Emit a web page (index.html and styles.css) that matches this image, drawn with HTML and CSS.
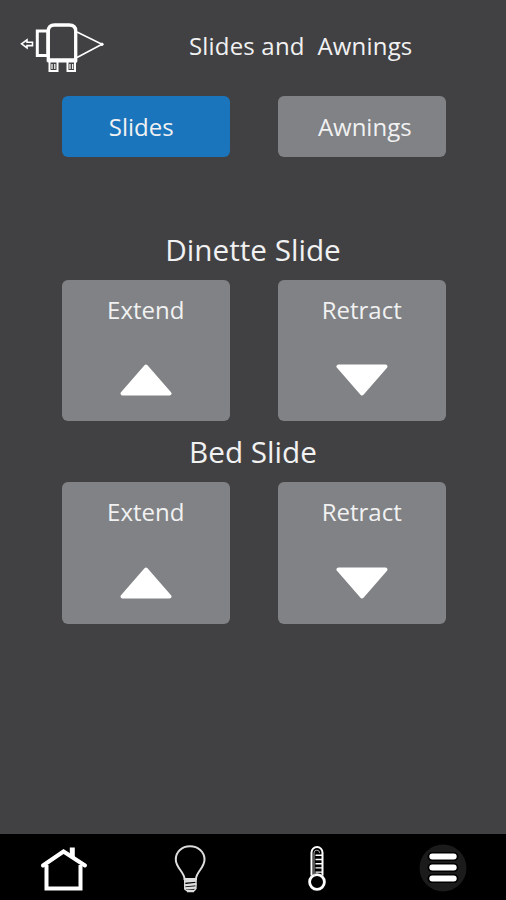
FILE: index.html
```html
<!DOCTYPE html>
<html lang="en">
<head>
  <meta charset="UTF-8">
  <meta name="viewport" content="width=device-width, initial-scale=1.0">
  <title>Slides and Awnings</title>
  <link rel="stylesheet" href="styles.css">
</head>
<body>
  <div class="app">
    <header class="header">
      <svg class="camper" viewBox="0 0 90 60" fill="none" stroke="#fff">
        <path d="M1.5 25.8 L7 21.8 V24.2 H12.5 V27.6 H7 V30 Z" stroke-width="1.6"/>
        <rect x="17.3" y="13" width="10.5" height="24.5" stroke-width="3"/>
        <path d="M28.3 42 V13 Q28.3 7 34.5 7 H49 Q55.7 7 55.7 13 V42 Z" stroke-width="3.3"/>
        <path d="M57 14 L82 26.3 L57 39.5" stroke-width="1.6"/>
        <circle cx="82" cy="26.3" r="1.2" fill="#fff"/>
        <path d="M27.5 43.5 H57 M29.5 44 V53 H37.5 V44 M47.5 44 V53 H55 V44" stroke-width="2"/>
        <path d="M32 46 V51 M34.8 46 V51 M50 46 V51 M52.7 46 V51" stroke-width="1.2"/>
      </svg>
      <h1>Slides and&nbsp; Awnings</h1>
    </header>

    <div class="row tabs">
      <button class="tab active">Slides</button>
      <button class="tab awnings">Awnings</button>
    </div>

    <section class="slide-group">
      <h2>Dinette Slide</h2>
      <div class="row">
        <button class="control">
          Extend
          <svg class="arrow" viewBox="0 0 52 32"><path d="M26 2.5 L49.5 29.5 H2.5 Z"/></svg>
        </button>
        <button class="control">
          Retract
          <svg class="arrow" viewBox="0 0 52 32"><path d="M2.5 2.5 H49.5 L26 29.5 Z"/></svg>
        </button>
      </div>
    </section>

    <section class="slide-group">
      <h2>Bed Slide</h2>
      <div class="row">
        <button class="control">
          Extend
          <svg class="arrow" viewBox="0 0 52 32"><path d="M26 2.5 L49.5 29.5 H2.5 Z"/></svg>
        </button>
        <button class="control">
          Retract
          <svg class="arrow" viewBox="0 0 52 32"><path d="M2.5 2.5 H49.5 L26 29.5 Z"/></svg>
        </button>
      </div>
    </section>

    <nav class="navbar">
      <a class="nav-item">
        <svg viewBox="0 0 60 60" fill="none" stroke="#fff">
          <path d="M13.5 28 V51.5 H47.5 V28" stroke-width="4"/>
          <path d="M10 28.5 L30.5 14.5 L52 28.5" stroke-width="4" stroke-linecap="round"/>
          <path d="M39.3 10.5 V20" stroke-width="5"/>
        </svg>
      </a>
      <a class="nav-item">
        <svg viewBox="0 0 60 60" fill="none" stroke="#ddd">
          <path d="M24.5 42 C24.5 35 15.8 31 15.8 22.5 C15.8 14.5 22 9.3 30 9.3 C38 9.3 44.5 14.5 44.5 22.5 C44.5 31 36 35 36 42 Z" stroke-width="2"/>
          <path d="M24 44.5 L36.5 43.5 M24 48.3 L36.5 47 M24.5 51.3 L36 50.5 M27 54 H34" stroke-width="2.3"/>
          <path d="M24.7 42 V52 L27 54 M36 42 V51.5 L34 54" stroke-width="1.3"/>
        </svg>
      </a>
      <a class="nav-item">
        <svg viewBox="0 0 60 60" fill="none" stroke="#fff">
          <path d="M25.5 38.5 V15.5 A5.5 5.5 0 0 1 36.5 15.5 V38.5" stroke-width="2"/>
          <circle cx="31" cy="45" r="7.4" stroke-width="2.8"/>
          <path d="M28 38.5 V16 A2.8 2.8 0 0 1 33.6 16" stroke="#aaa" stroke-width="1"/>
          <path d="M29.5 18.3 H36 M29.5 22.5 H36 M29.5 26.7 H36 M29.5 30.9 H36 M29.5 35.1 H36" stroke-width="1.4"/>
        </svg>
      </a>
      <a class="nav-item">
        <svg viewBox="0 0 60 60" fill="none" stroke="#fff">
          <circle cx="30" cy="31" r="23.5" fill="#1b1b1b" stroke="none"/>
          <path d="M19 19.5 H41 M19 30.5 H41 M19 41.5 H41" stroke="#000" stroke-width="9" stroke-linecap="round"/>
          <path d="M19.3 19.5 H40.7 M19.3 30.5 H40.7 M19.3 41.5 H40.7" stroke-width="6" stroke-linecap="round"/>
        </svg>
      </a>
    </nav>
  </div>
</body>
</html>
```
FILE: styles.css
```css
:root {
  --main-bg: #414143;
  --button-bg: #808285;
  --active-bg: #1b75bc;
  --font-color: #f1f1f2;
}

html, body {
  margin: 0;
  padding: 0;
  height: 100%;
  background: var(--main-bg);
  color: var(--font-color);
  font-family: "Open Sans", "Noto Sans", sans-serif;
}

.app {
  display: flex;
  flex-direction: column;
  height: 100vh;
  overflow: hidden;
}

.header {
  display: flex;
  height: 96px;
  box-sizing: border-box;
  padding: 14px 0 0 20px;
}

.camper {
  width: 90px;
  height: 60px;
  margin-top: 4px;
}

h1 {
  margin: 0 0 0 79px;
  font-size: 24px;
  font-weight: 400;
  line-height: 63px;
  letter-spacing: 0.18px;
  white-space: nowrap;
}

h2 {
  margin: 0;
  height: 61px;
  font-size: 29.7px;
  font-weight: 400;
  line-height: 61px;
  text-align: center;
}

.row {
  display: flex;
  gap: 47.5px;
  padding: 0 0 0 61.5px;
}

.tabs {
  margin-bottom: 61.5px;
}

button {
  width: 168.5px;
  border: none;
  border-radius: 6px;
  background: var(--button-bg);
  color: var(--font-color);
  font-family: inherit;
  font-size: 24px;
}

.tab {
  height: 61px;
  padding: 0 9px 0 0;
}

.awnings {
  padding: 0 0 0 6px;
}

.active {
  background: var(--active-bg);
}

.control {
  display: flex;
  flex-direction: column;
  align-items: center;
  justify-content: space-between;
  height: 141.5px;
  padding: 13px 0 25px;
}

.arrow {
  width: 52px;
  height: 32px;
  fill: #fff;
  stroke: #fff;
  stroke-width: 4;
  stroke-linejoin: round;
}

.navbar {
  display: flex;
  height: 66.5px;
  margin-top: auto;
  background: #000;
}

.nav-item {
  flex: 1;
  display: flex;
  justify-content: center;
}

.nav-item svg {
  width: 60px;
  height: 60px;
  margin-top: 3px;
}
```
